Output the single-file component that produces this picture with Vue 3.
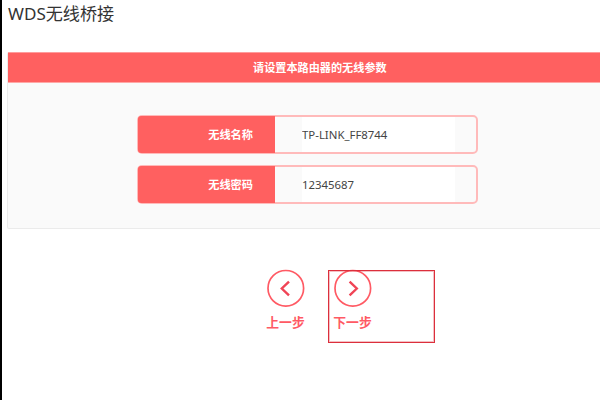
<template>
  <div class="wds-page">
    <h1 class="page-title">WDS无线桥接</h1>

    <section class="panel">
      <header class="panel-header">请设置本路由器的无线参数</header>
      <div class="panel-body">
        <label v-for="field in fields" :key="field.key" class="field">
          <span class="field-label">{{ field.label }}</span>
          <input v-model="field.value" class="field-input" type="text" spellcheck="false" />
        </label>
      </div>
    </section>

    <nav class="steps">
      <button v-for="step in steps" :key="step.key" class="step" :class="step.key" type="button">
        <svg class="step-icon" viewBox="0 0 38 38">
          <circle cx="18.8" cy="19.3" r="17.8" />
          <path :d="step.arrow" />
        </svg>
        <span class="step-text">{{ step.text }}</span>
      </button>
    </nav>
  </div>
</template>

<script setup>
import { ref } from 'vue'

const fields = ref([
  { key: 'ssid', label: '无线名称', value: 'TP-LINK_FF8744' },
  { key: 'password', label: '无线密码', value: '12345687' }
])

const steps = [
  { key: 'prev', text: '上一步', arrow: 'M22 12.6 L14.8 19.5 L22 26.4' },
  { key: 'next', text: '下一步', arrow: 'M15.6 12.6 L22.8 19.5 L15.6 26.4' }
]
</script>

<style>
body {
  margin: 0;
  overflow: hidden;
  background: #fff;
}
</style>

<style scoped>
.wds-page {
  box-sizing: border-box;
  width: 600px;
  height: 400px;
  padding-left: 5px;
  border-left: 2px solid #000;
  overflow: hidden;
  background: #fff;
  font-family: 'Noto Sans', 'Noto Sans CJK SC', sans-serif;
}

.page-title {
  margin: 0;
  padding: 2px 0 0 1px;
  height: 50px;
  box-sizing: border-box;
  font-size: 17.1px;
  line-height: 24px;
  font-weight: 400;
  color: #333;
}

.panel {
  box-sizing: border-box;
  width: 620px;
  height: 177px;
  margin-top: 2px;
  border: 1px solid #ebebeb;
  border-top: none;
  border-radius: 2px;
  background: #fafafa;
}

.panel-header {
  box-sizing: border-box;
  height: 31px;
  border-top: 1px solid #ff9c9c;
  border-bottom: 1px solid #ffa8a6;
  background: #ff6060;
  color: #fff;
  font-size: 11.15px;
  font-weight: 700;
  line-height: 30px;
  padding-left: 245px;
}

.panel-body {
  display: flex;
  flex-direction: column;
  gap: 11px;
  padding: 32px 0 0 129px;
}

.field {
  display: flex;
  box-sizing: border-box;
  width: 341px;
  height: 39px;
  border: 2px solid #ffbaba;
  border-radius: 5px;
}

.field-label {
  box-sizing: border-box;
  width: 137px;
  height: 37px;
  margin: -1px 0 0 -1px;
  padding-right: 22px;
  border-radius: 3px 0 0 3px;
  background: #ff6060;
  color: #fff;
  font-size: 11.2px;
  font-weight: 700;
  line-height: 37px;
  text-align: right;
}

.field-input {
  box-sizing: border-box;
  width: 153px;
  height: 35px;
  margin-left: 27px;
  padding: 0;
  border: none;
  outline: none;
  background: #fff;
  color: #444;
  font-family: inherit;
  font-size: 11.4px;
}

.steps {
  display: flex;
  gap: 28px;
  padding: 40px 0 0 259px;
}

.step {
  display: flex;
  flex-direction: column;
  align-items: center;
  width: 39px;
  padding: 0;
  border: none;
  background: none;
  color: #ff5a64;
  font-family: inherit;
  cursor: pointer;
}

.step-icon {
  width: 38px;
  height: 38px;
  fill: none;
  stroke: currentColor;
  stroke-width: 1.7;
}

.step-icon path {
  stroke: #f04456;
  stroke-width: 2.4;
}

.step-text {
  margin-top: 5px;
  font-size: 12.8px;
  font-weight: 700;
  line-height: 20px;
  white-space: nowrap;
}

/* 高亮框，覆盖在下一步按钮上 */
.next {
  position: relative;
}

.next::after {
  content: '';
  position: absolute;
  top: 1px;
  left: -5px;
  box-sizing: border-box;
  width: 107px;
  height: 73px;
  border: 1px solid #dc2f3c;
  box-shadow: inset 0 0 0 1px rgba(220, 47, 60, 0.3);
}
</style>
